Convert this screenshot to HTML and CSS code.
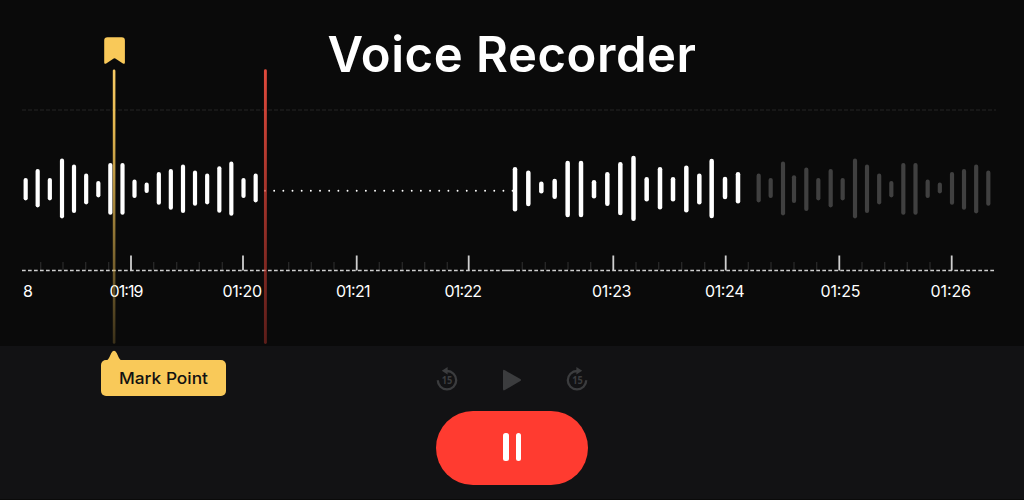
FILE: index.html
```html
<!DOCTYPE html>
<html lang="en">
<head>
<meta charset="utf-8">
<title>Voice Recorder</title>
<link rel="stylesheet" href="styles.css">
</head>
<body>
<main class="recorder">
  <section class="stage">
    <h1 class="title">Voice Recorder</h1>
    <svg class="timeline" viewBox="0 0 1024 346" width="1024" height="346">
      <defs>
        <linearGradient id="mark" gradientUnits="userSpaceOnUse" x1="0" y1="70" x2="0" y2="344">
          <stop offset="0" stop-color="#f9cc66"/><stop offset=".2" stop-color="#e5b850"/><stop offset="1" stop-color="#e5b850" stop-opacity=".22"/>
        </linearGradient>
        <linearGradient id="head" gradientUnits="userSpaceOnUse" x1="0" y1="70" x2="0" y2="344">
          <stop offset="0" stop-color="#e04a3c"/><stop offset="1" stop-color="#d53a30" stop-opacity=".4"/>
        </linearGradient>
      </defs>
      <path class="guide" d="M22 110H996"/>
      <path class="silence" d="M265 190.7H514"/>
      <g id="wave" transform="translate(0 140)"></g>
      <g id="ticks"></g>
      <path class="axis" d="M22 270.500H513M504.300 270.500H996"/>
      <g class="times">
        <text x="23" y="296.8" textLength="10">8</text>
        <text x="109.5" y="296.8" textLength="34">01:19</text>
        <text x="222.5" y="296.8" textLength="39.5">01:20</text>
        <text x="336" y="296.8" textLength="34.5">01:21</text>
        <text x="444.5" y="296.8" textLength="37.5">01:22</text>
        <text x="592" y="296.8" textLength="39.5">01:23</text>
        <text x="705" y="296.8" textLength="39.5">01:24</text>
        <text x="820.5" y="296.8" textLength="40">01:25</text>
        <text x="930.5" y="296.8" textLength="40.5">01:26</text>
      </g>
      <path class="mark-line" d="M114.100 70.800V342.500"/>
      <path class="head-line" d="M265.400 70.800V342.500"/>
      <path class="flag" d="M107.500 37.200H121.700Q124.900 37.200 124.900 40.400V62.500Q124.900 64.500 122.900 63.400L115.300 58.500Q114.500 58 113.700 58.500L106.200 63.400Q104.200 64.500 104.200 62.500V40.400Q104.200 37.200 107.500 37.200Z"/>
    </svg>
  </section>
  <section class="panel">
    <div class="transport">
      <svg class="icon" viewBox="-12 -12.500 24 26" width="24" height="26">
        <path class="ring" d="M-9.200 .7A9.200 9.200 0 1 0 0 -8.500H-1"/>
        <path class="fill" d="M-5.200 -8.700L.6 -12.400V-4.900Z"/>
        <text class="skip" x="-5.300" y="4.600" textLength="10.500" lengthAdjust="spacingAndGlyphs">15</text>
      </svg>
      <svg class="icon" viewBox="0 0 20 24" width="20" height="24">
        <path class="fill" d="M1 3.200Q1 1.200 2.900 2.200L18.300 11.100Q19.800 12 18.300 13L2.900 22.100Q1 23.100 1 21.100Z"/>
      </svg>
      <svg class="icon" viewBox="-12 -12.500 24 26" width="24" height="26">
        <path class="ring" d="M9.200 .7A9.200 9.200 0 1 1 0 -8.500H1"/>
        <path class="fill" d="M5.200 -8.700L-.6 -12.400V-4.900Z"/>
        <text class="skip" x="-4.800" y="4.600" textLength="10.500" lengthAdjust="spacingAndGlyphs">15</text>
      </svg>
    </div>
    <button class="pause" aria-label="Pause"><span class="pause-bar"></span><span class="pause-bar"></span></button>
    <div class="tooltip">
      <svg class="tip" viewBox="0 0 18 11" width="18" height="11"><path d="M0 11Q3 10.500 4.500 7L6.300 3Q9 -1.600 11.700 3L13.500 7Q15 10.500 18 11Z"/></svg>
      <svg class="tooltip-text" width="90" height="24"><text x="0" y="18" textLength="89" lengthAdjust="spacingAndGlyphs">Mark Point</text></svg>
    </div>
  </section>
</main>
<script src="wave.js"></script>
</body>
</html>
```
FILE: styles.css
```css
* { box-sizing: border-box; }
body { margin: 0; background: #0a0a0a; font-family: Inter, "Liberation Sans", sans-serif; }
.recorder { width: 1024px; height: 500px; display: flex; flex-direction: column; overflow: hidden; }
.stage { position: relative; height: 346px; background: #0a0a0a; }
.title { margin: 0; padding-top: 24.500px; text-align: center; color: #fff; font-size: 49px; line-height: 60px; font-weight: 600; letter-spacing: .55px; }
.timeline { position: absolute; inset: 0; }
.guide { stroke: #1d1d1d; stroke-width: 1.3; stroke-dasharray: 4 2; }
.silence { stroke: #fff; stroke-width: 1.9; stroke-linecap: round; stroke-dasharray: 0 9.170; }
.axis { stroke: #cfcfcf; fill: none; stroke-width: 1.4; stroke-dasharray: 3.700 2.300; }
.bar { stroke: #fff; stroke-width: 4.200; stroke-linecap: round; }
.bar-wide { stroke-width: 4.500; }
.bar-dim { stroke: #404040; }
.tick-major { stroke: #cfcfcf; stroke-width: 1.800; }
.tick-minor { stroke: #292929; stroke-width: 1.300; }
.times { fill: #fff; font-size: 16px; }
.mark-line { stroke: url(#mark); stroke-width: 2.600; stroke-linecap: round; }
.head-line { stroke: url(#head); stroke-width: 2.900; stroke-linecap: round; }
.flag { fill: #f9c959; }
.panel { position: relative; height: 153px; background: #121214; display: flex; flex-direction: column; align-items: center; padding-top: 20px; }
.transport { display: flex; align-items: center; gap: 43px; height: 27px; margin-bottom: 18px; }
.icon { display: block; }
.ring { fill: none; stroke: #3b3c3e; stroke-width: 2.300; stroke-linecap: butt; }
.fill { fill: #3b3c3e; }
.skip { fill: #3b3c3e; font-family: "Open Sans", sans-serif; font-size: 10.500px; font-weight: 700; }
.pause { width: 152px; height: 74px; border: 0; border-radius: 37px; background: #ff3b30; display: flex; justify-content: center; align-items: center; gap: 7px; padding: 0 0 2px; }
.pause-bar { width: 5.500px; height: 27.500px; border-radius: 2.500px; background: #fff; }
.tooltip { position: absolute; left: 101px; top: 14px; width: 124.500px; height: 36px; border-radius: 5px; background: #f9c959; padding: 2px 0 0 17.500px; }
.tip { position: absolute; left: 4px; top: -10px; fill: #f9c959; }
.tooltip-text { display: block; margin-top: 4px; fill: #111; font-size: 16.500px; font-weight: 500; }
```
FILE: wave.js
```js
const NS = "http://www.w3.org/2000/svg";

// Each bar is [x, top, bottom] in thirds of a pixel.
const groups = [
  { origin: 0, cls: "bar", bars: [[77,114,181],[113,87,202],[149.5,114,181],[186,56,235],[222,74,219],[258.5,101,193],[295,123,172],[331,69,224],[367.5,69,224],[403.5,119,174],[440,128,159],[476.5,96,194],[512.5,87,209],[549,74,219],[585,92,197],[621.5,101,193],[658,79,218],[694,65,227],[730.5,114,174],[767,101,187]] },
  { origin: 500, cls: "bar bar-wide", bars: [[45,82,214],[85,92,198],[124,125,160],[164,117,176],[203,63,231],[243,63,231],[282,121,175],[322,97,197],[361,67,225],[400.5,48,242],[440,112,184],[480,82,208],[519,112,184],[559,77,217],[598,101,193],[635,57,234],[675,111,177],[714,97,190]] },
  { origin: 740, cls: "bar bar-dim", bars: [[56,101,187],[92,114,174],[129,65,226],[162,106,189],[199,83,213],[235,114,181],[272,87,202],[308,114,181],[345,56,235],[381,74,219],[417.5,101,193],[454,123,172],[490,69,224],[526.5,69,224],[563,119,174],[599.5,128,160],[636,96,194],[672,87,209],[708.5,74,220],[745,92,197]] }
];
const majors = [131, 243, 356.7, 468.7, 613.3, 725.7, 839.3, 951.7];
const minors = [40.7,63,85.7,108.7,153.7,176.7,199.3,222.3,288.7,311.3,334,379.3,402.3,424.7,447.3,522.3,545.3,568,590.7,636,658.7,681.7,704.7,748.3,771,794,816.7,862,884.7,907.3,930];

function line(parent, cls, x, top, bottom) {
  const el = document.createElementNS(NS, "line");
  el.setAttribute("class", cls);
  el.setAttribute("x1", x);
  el.setAttribute("x2", x);
  el.setAttribute("y1", top);
  el.setAttribute("y2", bottom);
  parent.appendChild(el);
}

const wave = document.getElementById("wave");
for (const g of groups) {
  for (const [x, top, bottom] of g.bars) {
    line(wave, g.cls, g.origin + x / 3, top / 3 + 2, bottom / 3 - 2);
  }
}
const ticks = document.getElementById("ticks");
majors.forEach(x => line(ticks, "tick-major", x, 255.5, 270.5));
minors.forEach(x => line(ticks, "tick-minor", x, 262, 270));
```
